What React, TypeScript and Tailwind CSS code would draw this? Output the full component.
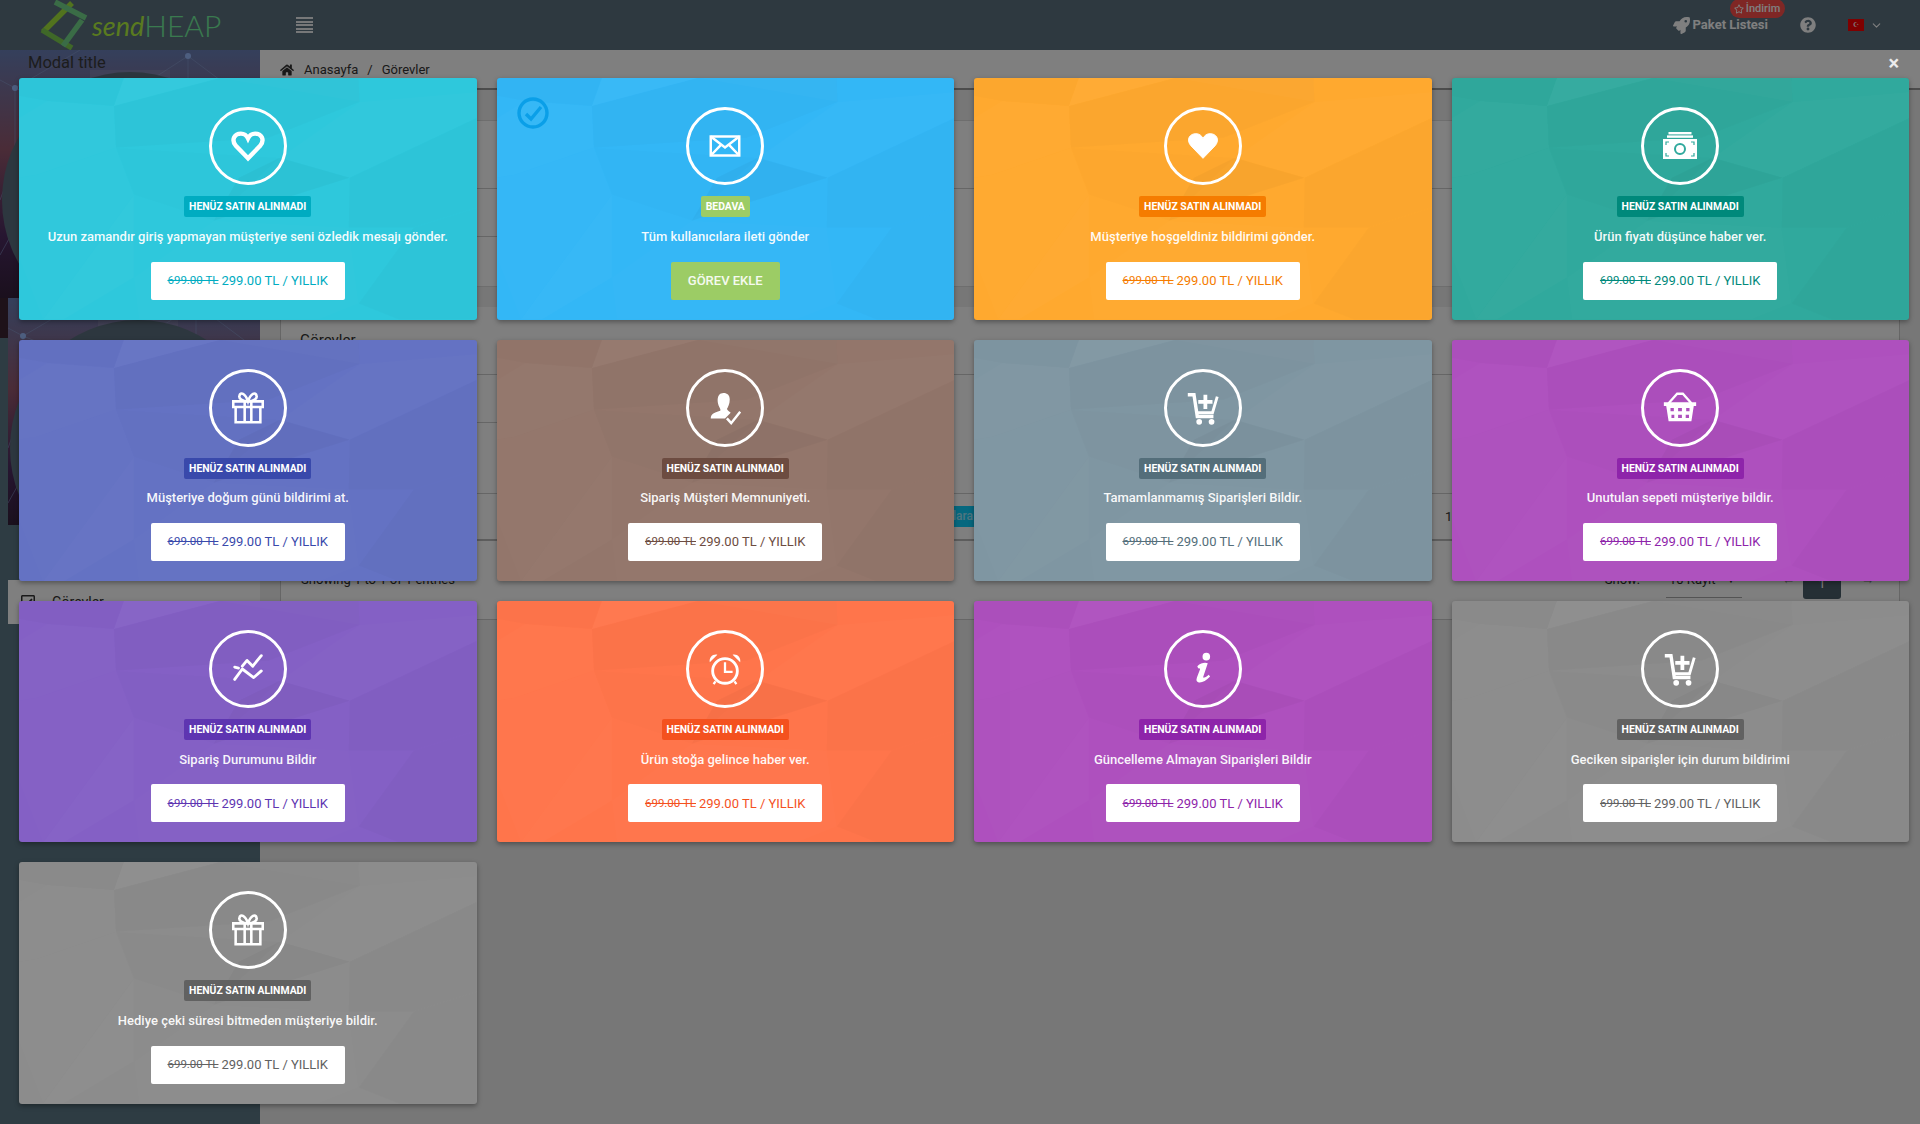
import { ReactNode } from 'react'
import { ChevronDown } from 'lucide-react'
import { FaHome, FaQuestionCircle, FaRegStar, FaRocket, FaRegCheckSquare } from 'react-icons/fa'

const facets: { p: string; f: string; o: number }[] = [
  { p: '105,0 95,28 201,0', f: '#fff', o: 0.03 },
  { p: '28,23 95,28 97,70 18,97 0,100 0,40', f: '#fff', o: 0.015 },
  { p: '95,28 201,0 340,0 341,24 250,60 97,70', f: '#000', o: 0.014 },
  { p: '0,0 105,0 95,28 28,23 0,18', f: '#000', o: 0.012 },
  { p: '261,80 331,100 195,143 220,100', f: '#000', o: 0.028 },
  { p: '97,70 261,80 195,143 115,117', f: '#000', o: 0.008 },
  { p: '0,100 18,97 97,70 115,117 24,242 0,180', f: '#fff', o: 0.012 },
  { p: '24,242 115,117 115,200 45,242', f: '#fff', o: 0.018 },
  { p: '115,200 195,143 330,150 340,226 300,242 120,242', f: '#fff', o: 0.012 },
  { p: '331,100 458,40 458,130 395,150 330,150', f: '#000', o: 0.014 },
  { p: '341,24 458,14 458,40 331,100 261,80', f: '#fff', o: 0.014 },
  { p: '340,226 395,150 458,130 458,242 380,242', f: '#000', o: 0.014 },
  { p: '201,0 340,0 341,24', f: '#fff', o: 0.014 },
]

function Heart({ filled }: { filled?: boolean }) {
  return (
    <svg viewBox="0 0 40 40" className="w-[38px] h-[38px]">
      <path
        d="M20 33 L7 19.5 C2 13 6 7 12.5 7 C16 7 18.6 9 20 12 C21.4 9 24 7 27.5 7 C34 7 38 13 33 19.5 Z"
        fill={filled ? '#fff' : 'none'}
        stroke="#fff"
        strokeWidth={filled ? 1 : 4.6}
        strokeLinejoin="miter"
      />
    </svg>
  )
}

function Mail() {
  return (
    <svg viewBox="0 0 40 40" className="w-[38px] h-[38px]" fill="none" stroke="#fff" strokeWidth="2.6">
      <rect x="5" y="10" width="30" height="20" />
      <path d="M5 10 L20 21.5 L35 10 M5 30 L16 18.5 M35 30 L24 18.5" />
    </svg>
  )
}

function Money() {
  return (
    <svg viewBox="0 0 40 40" className="w-[40px] h-[40px]">
      <rect x="8.5" y="6" width="23" height="2.4" fill="#fff" />
      <rect x="7" y="9.4" width="26" height="2.4" fill="#fff" />
      <path
        fillRule="evenodd"
        fill="#fff"
        d="M3 13 H37 V33 H3 Z M20 17 A6 6 0 1 0 20 29 A6 6 0 1 0 20 17 Z M20 19 A4 4 0 1 1 20 27 A4 4 0 1 1 20 19 Z"
      />
      <path d="M6 19 V16 H9 M34 19 V16 H31 M6 27 V30 H9 M34 27 V30 H31" fill="none" stroke="#30a99d" strokeWidth="1.2" />
    </svg>
  )
}

function Gift() {
  return (
    <svg viewBox="0 0 40 40" className="w-[38px] h-[38px]" fill="none" stroke="#fff" strokeWidth="2.7">
      <path d="M4.5 13 H35.5 V19 H4.5 Z M7 19 V35 H33 V19 M16.5 13 V35 M23.5 13 V35" />
      <path d="M20 13 C14 13 10 10 11 7 C12 3 17 4 20 13 C23 4 28 3 29 7 C30 10 26 13 20 13 Z" />
    </svg>
  )
}

function UserCheck() {
  return (
    <svg viewBox="0 0 40 40" className="w-[38px] h-[38px]" fill="#fff">
      <path d="M15 5 C20 3 25 5 25 11 C25 16 23 19 22 21 C23 23 25 24 26 25 L20 31 H5 C5 27 8 25 15 23 C15.5 22 15 21 14 19 C12 15 11 8 15 5 Z" />
      <path d="M22 31 L26.5 36 L36 24" fill="none" stroke="#fff" strokeWidth="2.6" />
    </svg>
  )
}

function CartPlus() {
  return (
    <svg viewBox="0 0 40 40" className="w-[38px] h-[38px]" fill="none" stroke="#fff">
      <path d="M4 6 H10.5 L14 29 H31" strokeWidth="3.6" />
      <path d="M13 25 H30 L35 8" strokeWidth="3" />
      <path d="M22.5 6 V21 M15 13.5 H30" strokeWidth="4" />
      <circle cx="16" cy="34.5" r="3" fill="#fff" stroke="none" />
      <circle cx="29" cy="34.5" r="3" fill="#fff" stroke="none" />
    </svg>
  )
}

function Basket() {
  return (
    <svg viewBox="0 0 40 40" className="w-[38px] h-[38px]">
      <path d="M8 15 L17 5 H23 L32 15" fill="none" stroke="#fff" strokeWidth="2.4" />
      <path
        fill="#fff"
        fillRule="evenodd"
        d="M3 14 H37 V18 H34.5 L32 34 H8 L5.5 18 H3 Z M10 20 V23.5 H13.5 V20 Z M18 20 V23.5 H22 V20 Z M26.5 20 V23.5 H30 V20 Z M11 27 V30.5 H14 V27 Z M18 27 V30.5 H22 V27 Z M26 27 V30.5 H29.5 V27 Z"
      />
    </svg>
  )
}

function Trend() {
  return (
    <svg viewBox="0 0 40 40" className="w-[38px] h-[38px]" fill="none" stroke="#fff" strokeWidth="3" strokeLinecap="round" strokeLinejoin="round">
      <path d="M14 17 L19 11 L25 17 L34 6" />
      <path d="M6 31 L14 20 L26 29 L34 22" />
      <path d="M6 18 L10 19" />
    </svg>
  )
}

function Alarm() {
  return (
    <svg viewBox="0 0 40 40" className="w-[38px] h-[38px]" fill="none" stroke="#fff">
      <circle cx="20" cy="22" r="13" strokeWidth="3" />
      <path d="M20 13 V23 H28" strokeWidth="2.4" />
      <path d="M4 13 C3 8 7 4 12 5 Z M36 13 C37 8 33 4 28 5 Z" fill="#fff" stroke="none" />
      <path d="M10 33 L8 36 M30 33 L32 36" strokeWidth="2.4" />
    </svg>
  )
}

function InfoI() {
  return (
    <svg viewBox="0 0 40 40" className="w-[38px] h-[38px]" fill="#fff">
      <circle cx="23.5" cy="7" r="4" />
      <path d="M14 17 C18 13 23 13 25 14 L20 29 C22 29 24 28 26 26 L27.5 28 C23 33 18 35 15 34 C12.5 33 13 31 14 28 L17 20 C16.5 19 15.5 19 15 19.5 Z" />
    </svg>
  )
}

interface TaskCard {
  bg: string
  label: string
  accent: string
  text: string
  icon: ReactNode
  free?: boolean
}

const cards: TaskCard[] = [
  { bg: 'bg-[#2ec8dc]', label: 'bg-[#00acc1]', accent: 'text-[#00acc1]', text: 'Uzun zamandır giriş yapmayan müşteriye seni özledik mesajı gönder.', icon: <Heart /> },
  { bg: 'bg-[#33b7f6]', label: 'bg-[#9ccc65]', accent: 'text-[#9ccc65]', text: 'Tüm kullanıcılara ileti gönder', icon: <Mail />, free: true },
  { bg: 'bg-[#ffa92f]', label: 'bg-[#f57c00]', accent: 'text-[#f57c00]', text: 'Müşteriye hoşgeldiniz bildirimi gönder.', icon: <Heart filled /> },
  { bg: 'bg-[#30a99d]', label: 'bg-[#00897b]', accent: 'text-[#00897b]', text: 'Ürün fiyatı düşünce haber ver.', icon: <Money /> },
  { bg: 'bg-[#6472c3]', label: 'bg-[#3949ab]', accent: 'text-[#3949ab]', text: 'Müşteriye doğum günü bildirimi at.', icon: <Gift /> },
  { bg: 'bg-[#93766b]', label: 'bg-[#6d4c41]', accent: 'text-[#6d4c41]', text: 'Sipariş Müşteri Memnuniyeti.', icon: <UserCheck /> },
  { bg: 'bg-[#7f96a2]', label: 'bg-[#546e7a]', accent: 'text-[#546e7a]', text: 'Tamamlanmamış Siparişleri Bildir.', icon: <CartPlus /> },
  { bg: 'bg-[#ae50be]', label: 'bg-[#8e24aa]', accent: 'text-[#8e24aa]', text: 'Unutulan sepeti müşteriye bildir.', icon: <Basket /> },
  { bg: 'bg-[#8460c5]', label: 'bg-[#5e35b1]', accent: 'text-[#5e35b1]', text: 'Sipariş Durumunu Bildir', icon: <Trend /> },
  { bg: 'bg-[#ff754b]', label: 'bg-[#f4511e]', accent: 'text-[#f4511e]', text: 'Ürün stoğa gelince haber ver.', icon: <Alarm /> },
  { bg: 'bg-[#ae50be]', label: 'bg-[#8e24aa]', accent: 'text-[#8e24aa]', text: 'Güncelleme Almayan Siparişleri Bildir', icon: <InfoI /> },
  { bg: 'bg-[#8c8c8c]', label: 'bg-[#616161]', accent: 'text-[#616161]', text: 'Geciken siparişler için durum bildirimi', icon: <CartPlus /> },
  { bg: 'bg-[#8c8c8c]', label: 'bg-[#616161]', accent: 'text-[#616161]', text: 'Hediye çeki süresi bitmeden müşteriye bildir.', icon: <Gift /> },
]

function Card({ card }: { card: TaskCard }) {
  return (
    <div className={`relative h-[241.4px] overflow-hidden rounded-[3px] shadow-[0_2px_5px_rgba(0,0,0,0.35)] flex flex-col items-center pt-[29px] ${card.bg}`}>
      <svg viewBox="0 0 458 242" preserveAspectRatio="none" className="absolute inset-0 w-full h-full">
        {facets.map((f) => (
          <polygon key={f.p} points={f.p} fill={f.f} fillOpacity={f.o} />
        ))}
      </svg>
      {card.free && (
        <svg viewBox="0 0 32 32" className="absolute left-[20px] top-[19px] w-8 h-8" fill="none" stroke="#0a9fe8" strokeWidth="3.4">
          <circle cx="16" cy="16" r="14" />
          <path d="M9 17 L14 22 L24 10" />
        </svg>
      )}
      <div className="relative w-[78px] h-[78px] rounded-full border-[3px] border-white flex items-center justify-center">
        {card.icon}
      </div>
      <span className={`relative mt-[11px] h-[21px] px-[5px] rounded-[2px] text-[10.4px] leading-[21px] font-bold text-white ${card.label}`}>
        {card.free ? 'BEDAVA' : 'HENÜZ SATIN ALINMADI'}
      </span>
      <p className="relative mt-[9.6px] h-[20px] text-[13px] leading-[20px] font-medium text-white/95 whitespace-nowrap">{card.text}</p>
      {card.free ? (
        <button className="relative mt-[14.8px] w-[109px] h-[38px] rounded-[2px] bg-[#9ccc65] text-[13px] font-medium text-white/90">GÖREV EKLE</button>
      ) : (
        <button className={`relative mt-[14.8px] w-[194px] h-[38px] rounded-[2px] bg-white flex items-center justify-center gap-[3px] text-[13px] whitespace-nowrap ${card.accent}`}>
          <del className="text-[11.5px]">699.00 TL</del>
          <span>299.00 TL / YILLIK</span>
        </button>
      )}
    </div>
  )
}

function SidebarPicture({ height }: { height: number }) {
  return (
    <svg viewBox={`0 0 260 ${height}`} className="block w-full" style={{ height }} preserveAspectRatio="xMinYMin slice">
      <defs>
        <linearGradient id={`side${height}`} x1="0" y1="0" x2="0" y2="1">
          <stop offset="0" stopColor="#6a80b8" />
          <stop offset="0.4" stopColor="#95586f" />
          <stop offset="0.75" stopColor="#4d2c62" />
          <stop offset="1" stopColor="#35203a" />
        </linearGradient>
      </defs>
      <rect width="260" height={height} fill={`url(#side${height})`} />
      <g stroke="#8ea6d8" strokeOpacity="0.5" fill="none">
        <path d="M15 38 V110 V178 M0 30 L15 38 L80 0 M0 150 L15 110 M0 205 L15 178 L90 240 M15 38 L88 68" />
        <path d="M188 6 L120 50 M188 6 L260 60 M188 6 V60 M150 26 L60 90" />
      </g>
      <g fill="#9bbcff">
        <circle cx="15" cy="38" r="3" />
        <circle cx="15" cy="110" r="3" />
        <circle cx="15" cy="178" r="3" />
        <circle cx="188" cy="6" r="3" />
      </g>
      <rect x="90" y="20" width="80" height="240" fill="#fff" fillOpacity="0.1" />
      <circle cx="130" cy="150" r="128" fill="#5b6f7e" />
    </svg>
  )
}

function Header() {
  return (
    <header className="h-[50px] bg-[#5c7280] flex items-center shrink-0">
      <div className="w-[296px] h-full flex items-center pl-[38px]">
        <svg viewBox="0 0 50 50" className="w-[50px] h-[50px] shrink-0" fill="none" strokeWidth="5.5">
          <path d="M5 32 L34 3" stroke="#a4e63c" />
          <path d="M17 2 L48 18" stroke="#74d98c" />
          <path d="M4 30 L34 48" stroke="#7fd050" />
          <path d="M44 20 L25 46" stroke="#74d98c" />
        </svg>
        <span className="ml-[4px] [font-family:Lato,sans-serif] italic text-[27px] text-[#b4f53e] leading-none">send</span>
        <span className="[font-family:Lato,sans-serif] font-light text-[30px] text-[#74f49e] leading-none">HEAP</span>
      </div>
      <div className="w-[17px] flex flex-col gap-[1.5px]">
        <span className="h-[2px] bg-white/90" />
        <span className="h-[2px] bg-white/90" />
        <span className="h-[2px] bg-white/90" />
        <span className="h-[2px] bg-white/90" />
        <span className="h-[2px] bg-white/90" />
      </div>
      <div className="ml-auto flex items-center pr-[37px] text-white">
        <FaRocket className="text-[17px] mr-[3px]" />
        <span className="relative text-[13px] font-bold">
          Paket Listesi
          <span className="absolute left-[37px] top-[-16px] h-[19px] w-[55px] rounded-full bg-[#ff4f4a] flex items-center justify-center gap-[2px] text-[11px] font-medium whitespace-nowrap">
            <FaRegStar className="text-[10px]" />
            İndirim
          </span>
        </span>
        <FaQuestionCircle className="ml-[32px] text-[16px]" />
        <span className="ml-[32px] w-[16px] h-[12px] bg-[#ff0000] flex items-center justify-center text-[7px] leading-none">☪</span>
        <ChevronDown className="ml-[6px] w-[13px] h-[13px]" />
      </div>
    </header>
  )
}

function Sidebar() {
  return (
    <aside className="w-[260px] shrink-0 bg-[#5c7886] flex flex-col">
      <SidebarPicture height={248} />
      <div className="h-[40px] bg-[#3c2433] w-[8px] absolute top-[298px]" />
      <div className="ml-[8px]">
        <SidebarPicture height={227} />
      </div>
      <div className="h-[55px]" />
      <div className="ml-[8px] h-[44px] bg-white flex items-center pl-[12px] gap-[16px] text-[14px] text-[#333]">
        <FaRegCheckSquare className="text-[16px]" />
        Görevler
      </div>
    </aside>
  )
}

function Main() {
  return (
    <main className="flex-1 bg-[#eeeeee] flex flex-col">
      <div className="h-[40px] bg-white border-b-2 border-[#999] flex items-center pl-[20px] pt-[1px] text-[13px] text-[#333]">
        <FaHome className="text-[14px] mr-[10px]" />
        Anasayfa
        <span className="mx-[9px]">/</span>
        Görevler
      </div>
      <div className="h-[30px]" />
      <div className="mx-[20px] h-[167px] bg-white border border-[#ddd] flex flex-col">
        <div className="h-[68px] border-b border-[#ccc]" />
        <div className="h-[48px] w-[500px] border-b border-[#ccc]" />
      </div>
      <div className="h-[20px]" />
      <div className="mx-[20px] h-[313px] bg-white border-x border-b border-[#ccc] flex flex-col text-[#333]">
        <div className="h-[68px] border-b border-[#ccc] pl-[19px] pt-[22px] text-[15px]">Görevler</div>
        <div className="h-[48px] w-[500px] border-b border-[#ccc]" />
        <div className="h-[71px] border-b border-[#ccc]" />
        <div className="h-[47px] border-b-2 border-[#bbb] flex items-center pl-[574px] text-[13px]">
          <span className="w-[120px] h-[21px] bg-[#0cd0ff] text-white/60 text-right text-[12px] font-medium leading-[21px] pr-[2px]">Kullanıcılara</span>
          <span className="ml-[470px]">1</span>
        </div>
        <div className="flex-1 flex items-start pl-[20px] pt-[29px] text-[13px] leading-[20px]">
          <span>Showing 1 to 1 of 1 entries</span>
          <span className="ml-auto">Show:</span>
          <span className="ml-[26px] w-[76px] border-b border-[#aaa] pb-[7px] flex justify-between pr-[6px] pl-[3px]">
            10 Kayıt <span className="text-[10px]">▼</span>
          </span>
          <span className="ml-[40px] text-[#888]">←</span>
          <span className="ml-[8px] -mt-[1px] w-[38px] h-[30px] rounded-[3px] bg-[#4a5e6a] text-white text-center leading-[30px]">1</span>
          <span className="ml-[20px] mr-[25px] text-[#888]">→</span>
        </div>
      </div>
    </main>
  )
}

export default function App() {
  return (
    <div className="relative w-[1920px] h-[1124px] overflow-hidden [font-family:Roboto,sans-serif]">
      <div className="h-full flex flex-col">
        <Header />
        <div className="flex-1 flex">
          <Sidebar />
          <Main />
        </div>
      </div>
      <div className="absolute inset-0 bg-black/50" />
      <div className="absolute inset-0 pl-[19px] pr-[11px]">
        <div className="h-[78.2px] pt-[48px] pl-[9px] pr-[10px] flex items-center justify-between">
          <h4 className="text-[16.5px] text-[#1c1c1c]">Modal title</h4>
          <span className="text-[20px] font-bold text-white/85 leading-none">×</span>
        </div>
        <div className="grid grid-cols-4 gap-x-[20px] gap-y-[20px]">
          {cards.map((c) => (
            <Card key={c.text} card={c} />
          ))}
        </div>
      </div>
    </div>
  )
}
